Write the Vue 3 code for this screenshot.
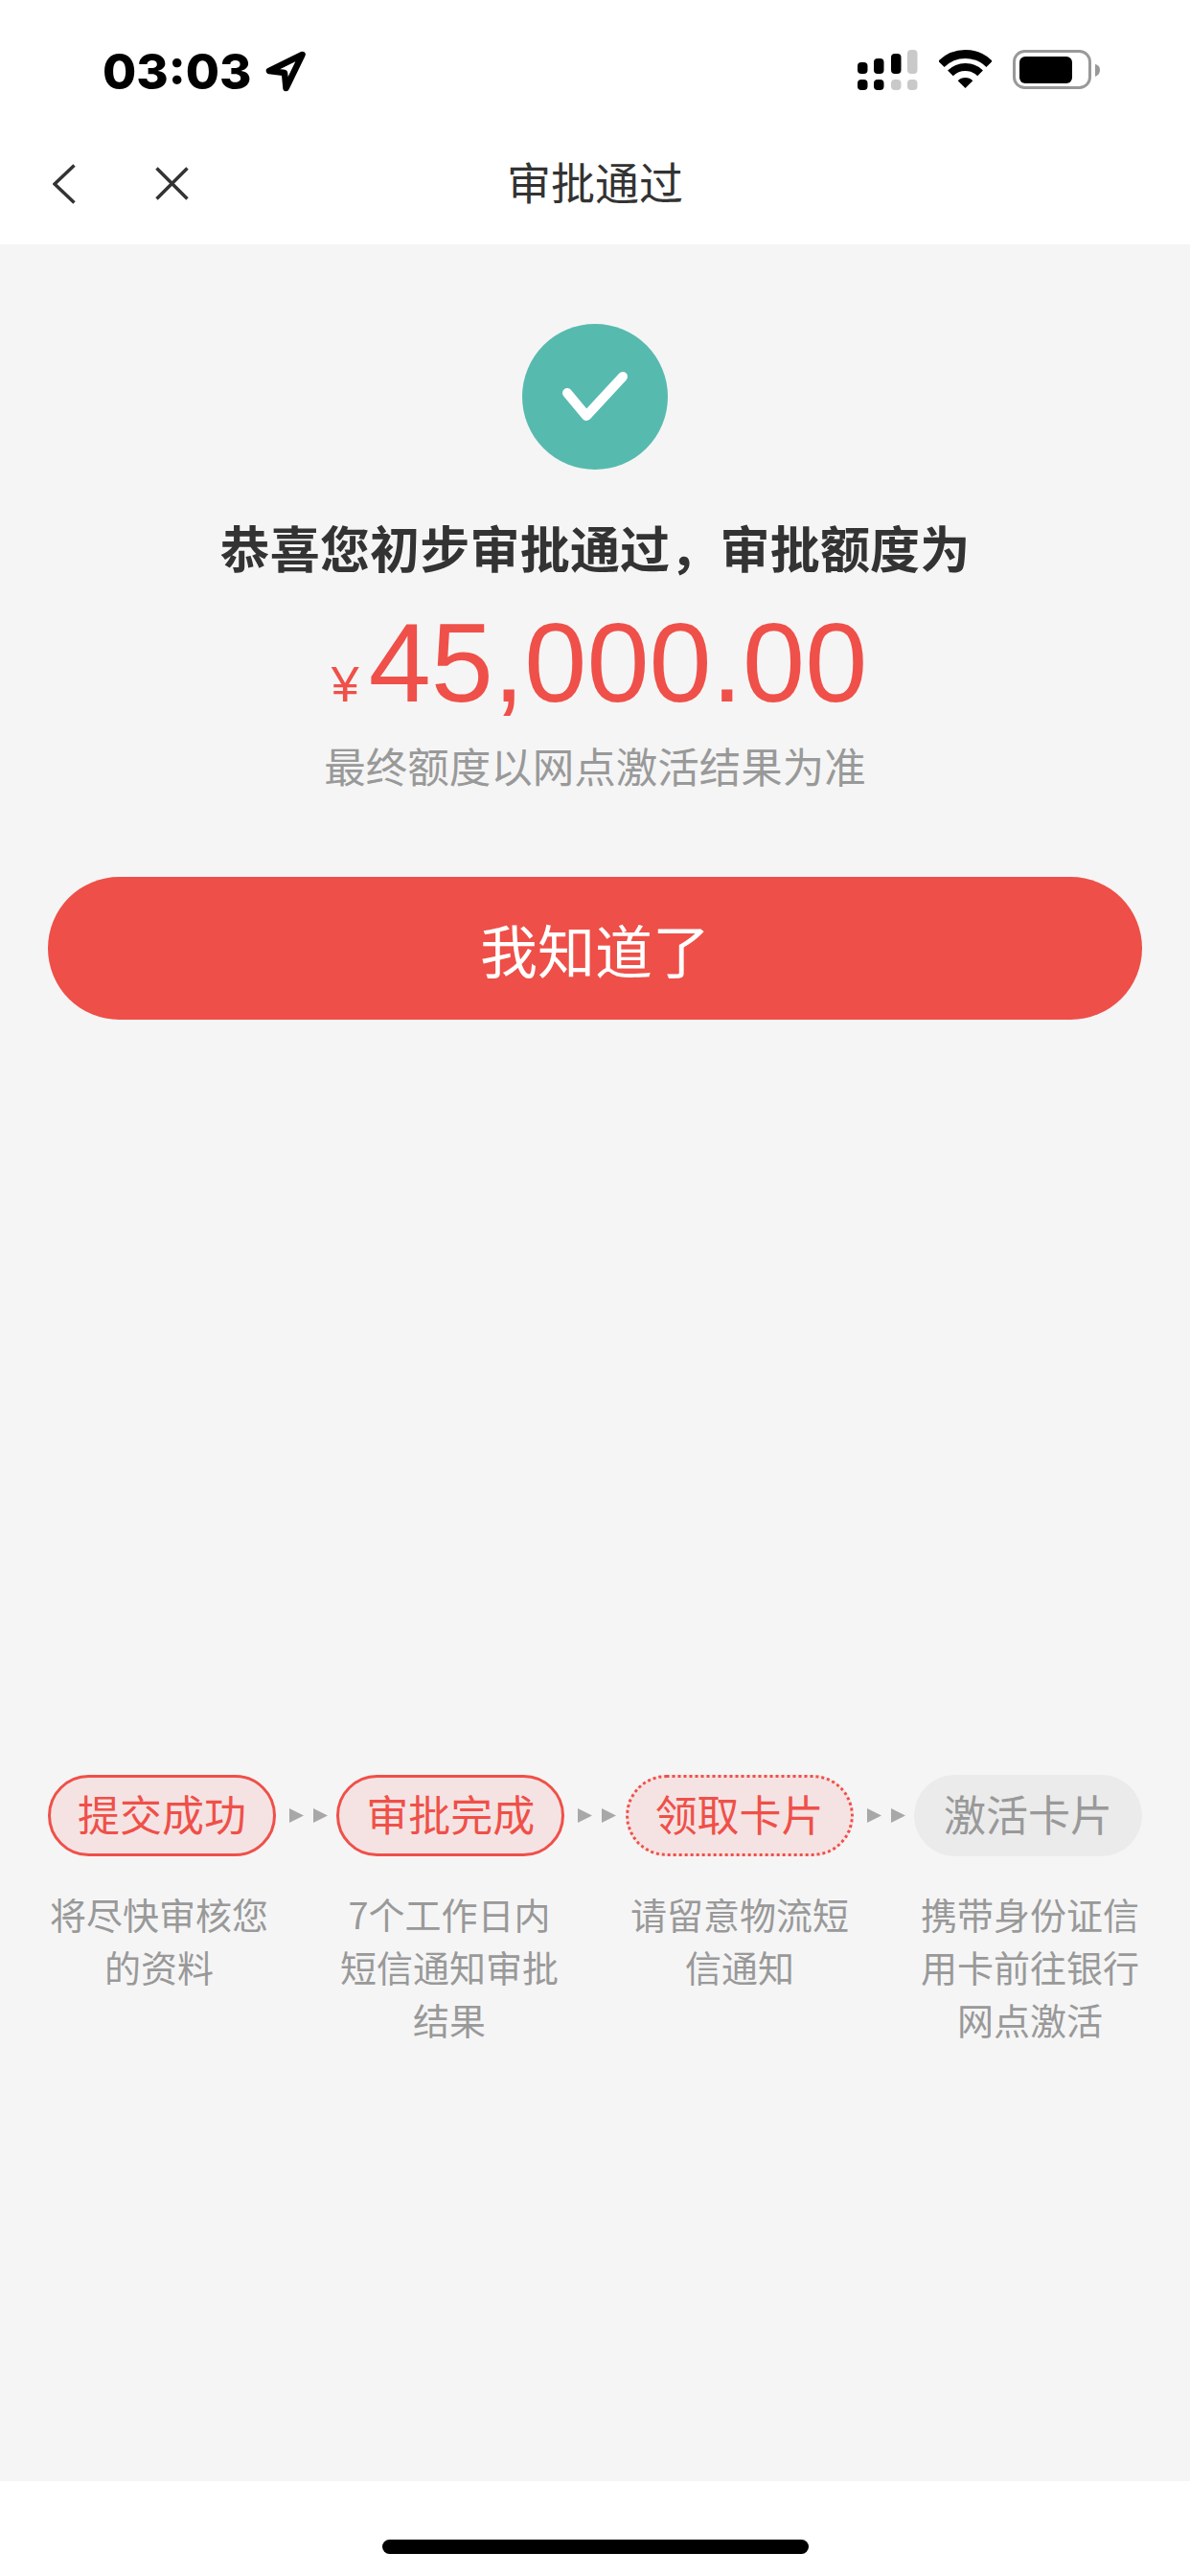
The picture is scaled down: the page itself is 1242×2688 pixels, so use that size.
<script setup>
const steps = [
  { label: '提交成功', desc: '将尽快审核您的资料', kind: 'done' },
  { label: '审批完成', desc: '7个工作日内短信通知审批结果', kind: 'done' },
  { label: '领取卡片', desc: '请留意物流短信通知', kind: 'current' },
  { label: '激活卡片', desc: '携带身份证信用卡前往银行网点激活', kind: 'todo' }
]
</script>

<template>
  <div class="screen">
    <header class="top">
      <div class="status">
        <div class="status-left">
          <span class="time">03:03</span>
          <svg class="loc" width="44" height="45" viewBox="0 0 44 45">
            <path d="M39.5 5 L5 22 L21 24 L22.5 40 Z" fill="#fff" stroke="#000" stroke-width="6.5" stroke-linejoin="round" />
          </svg>
        </div>
        <div class="status-right">
          <svg width="64" height="42" viewBox="0 0 64 42">
            <g fill="#000">
              <rect x="1" y="13" width="10.5" height="12" rx="4" />
              <rect x="18" y="9" width="10.5" height="16" rx="4" />
              <rect x="36" y="4" width="10.5" height="21" rx="4" />
              <rect x="1" y="31" width="10.5" height="11" rx="4" />
              <rect x="18" y="31" width="10.5" height="11" rx="4" />
            </g>
            <g fill="#c9c9c9">
              <rect x="53" y="0" width="10.5" height="25" rx="4" />
              <rect x="36" y="31" width="10.5" height="11" rx="4" />
              <rect x="53" y="31" width="10.5" height="11" rx="4" />
            </g>
          </svg>
          <svg class="wifi" width="55" height="40" viewBox="0 0 55 40">
            <path d="M2.4 14.9 A35.5 35.5 0 0 1 52.6 14.9" fill="none" stroke="#000" stroke-width="9" />
            <path d="M11.9 24.4 A22 22 0 0 1 43.1 24.4" fill="none" stroke="#000" stroke-width="8" />
            <path d="M27.5 40 L19.7 32.2 A11 11 0 0 1 35.3 32.2 Z" fill="#000" />
          </svg>
          <svg class="battery" width="92" height="42" viewBox="0 0 92 42">
            <rect x="1.5" y="1.5" width="79" height="38" rx="11" fill="none" stroke="#999" stroke-width="3" />
            <rect x="7" y="7" width="55" height="28" rx="6" fill="#000" />
            <path d="M86 15 Q91 16 91 21 Q91 26 86 28 Z" fill="#999" />
          </svg>
        </div>
      </div>
      <nav class="nav">
        <svg class="back" width="24" height="42" viewBox="0 0 24 42">
          <path d="M22.5 1.5 L2 21 L22.5 40.5" fill="none" stroke="#333" stroke-width="3.5" />
        </svg>
        <svg class="close" width="35" height="35" viewBox="0 0 35 35">
          <path d="M1.5 1.5 L33.5 33.5 M33.5 1.5 L1.5 33.5" fill="none" stroke="#333" stroke-width="3.5" />
        </svg>
        <h1 class="title">审批通过</h1>
      </nav>
    </header>

    <main class="main">
      <div class="badge">
        <svg width="68" height="52" viewBox="0 0 68 52">
          <path d="M5 22 L25 46 L63 5" fill="none" stroke="#fff" stroke-width="10" stroke-linecap="round" stroke-linejoin="round" />
        </svg>
      </div>
      <p class="headline">恭喜您初步审批通过，审批额度为</p>
      <div class="amount"><span class="yen">¥</span><span class="num">45,000.00</span></div>
      <p class="note">最终额度以网点激活结果为准</p>
      <button class="cta">我知道了</button>

      <section class="steps">
        <div class="pill-row">
          <template v-for="(s, i) in steps" :key="s.label">
            <div class="pill" :class="s.kind">{{ s.label }}</div>
            <div v-if="i < steps.length - 1" class="arrows">
              <svg v-for="n in 2" :key="n" width="15" height="15" viewBox="0 0 15 15">
                <path d="M0 0 L15 7.5 L0 15 Z" fill="#a8a8a8" />
              </svg>
            </div>
          </template>
        </div>
        <div class="desc-row">
          <p v-for="s in steps" :key="s.label" class="desc">{{ s.desc }}</p>
        </div>
      </section>
    </main>

    <footer class="foot">
      <div class="home"></div>
    </footer>
  </div>
</template>

<style scoped>
.screen {
  width: 1242px;
  height: 2688px;
  display: flex;
  flex-direction: column;
  background: #fff;
  font-family: "Noto Sans CJK SC", "Liberation Sans", sans-serif;
}
.top {
  height: 255px;
  flex: none;
  background: #fff;
}
.status {
  height: 128px;
  box-sizing: border-box;
  padding: 52px 93px 0 107px;
  display: flex;
  justify-content: space-between;
  align-items: flex-start;
}
.status-left {
  display: flex;
  align-items: center;
  gap: 13px;
}
.time {
  font-family: Inter, "Liberation Sans", sans-serif;
  font-weight: 800;
  font-size: 51px;
  line-height: 44px;
  color: #000;
}
.status-right {
  display: flex;
  align-items: flex-start;
  gap: 22px;
}
.nav {
  height: 127px;
  display: flex;
  align-items: center;
  padding-left: 55px;
  position: relative;
}
.close {
  margin-left: 83px;
}
.title {
  position: absolute;
  left: 0;
  right: 0;
  top: 28px;
  margin: 0;
  text-align: center;
  font-size: 46px;
  line-height: 64px;
  font-weight: 400;
  color: #333;
}
.main {
  flex: 1;
  background: #f5f5f5;
  padding: 83px 50px 0;
  display: flex;
  flex-direction: column;
  align-items: center;
}
.badge {
  width: 152px;
  height: 152px;
  border-radius: 50%;
  background: #57baae;
  display: flex;
  align-items: center;
  justify-content: center;
}
.headline {
  margin: 45px 0 0;
  font-size: 52px;
  letter-spacing: 0.2px;
  line-height: 72px;
  font-weight: 700;
  color: #333;
}
.amount {
  margin-top: 20px;
  margin-left: 9px;
  display: flex;
  align-items: baseline;
  gap: 10px;
  color: #ef5049;
  font-family: "Liberation Sans", sans-serif;
  line-height: 130px;
}
.yen {
  font-size: 52px;
}
.num {
  font-size: 117px;
}
.note {
  margin: -10px 0 0;
  font-size: 43.5px;
  line-height: 60px;
  color: #999;
}
.cta {
  margin-top: 86px;
  width: 100%;
  height: 149px;
  flex: none;
  border: 0;
  border-radius: 75px;
  background: #ee4f48;
  color: #fff;
  font-family: inherit;
  font-size: 60px;
}
.steps {
  margin-top: 788px;
  width: 100%;
}
.pill-row {
  display: flex;
  justify-content: space-between;
  align-items: center;
}
.pill {
  width: 238px;
  height: 85px;
  box-sizing: border-box;
  padding-bottom: 5px;
  border-radius: 43px;
  display: flex;
  align-items: center;
  justify-content: center;
  font-size: 44px;
}
.pill.done,
.pill.current {
  background: #f5e3e3;
  color: #ef5049;
  border: 3px solid #ef5049;
}
.pill.current {
  border-style: dotted;
}
.pill.todo {
  background: #ebebeb;
  color: #999;
}
.arrows {
  display: flex;
  gap: 10px;
  padding-left: 5px;
}
.arrows svg {
  display: block;
}
.desc-row {
  margin: 32px -2px 0 -3px;
  display: flex;
  justify-content: space-between;
}
.desc {
  margin: 0;
  width: 238px;
  text-align: center;
  font-size: 38px;
  line-height: 55px;
  color: #999;
}
.foot {
  height: 99px;
  flex: none;
  background: #fff;
  display: flex;
  justify-content: center;
  padding-top: 61px;
  box-sizing: border-box;
}
.home {
  width: 445px;
  height: 15px;
  border-radius: 8px;
  background: #000;
}
</style>
